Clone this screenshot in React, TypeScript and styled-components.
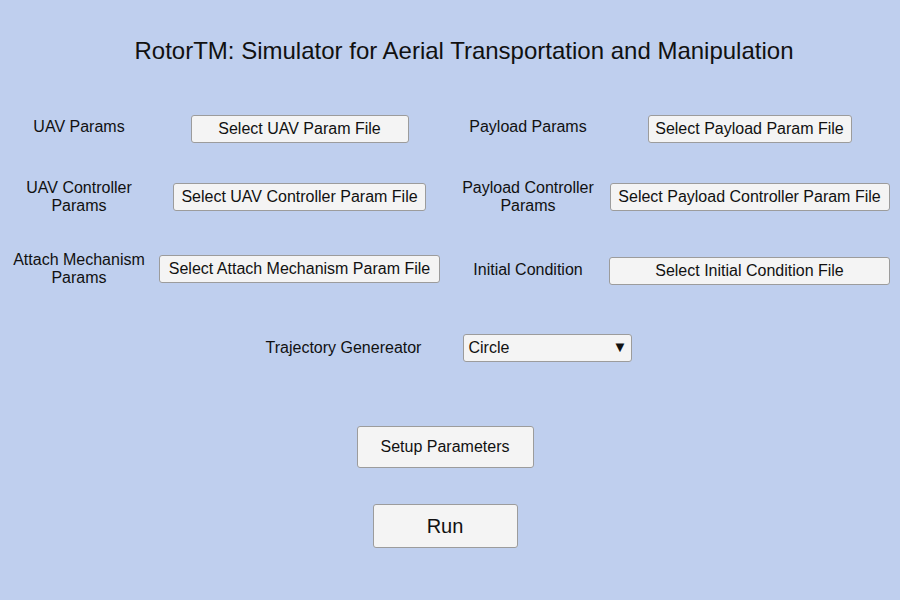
import React from "react";
import styled, { createGlobalStyle } from "styled-components";

const Global = createGlobalStyle`
  html, body { margin: 0; padding: 0; background: #bfcfee; }
  body { font-family: "Liberation Sans", Arial, sans-serif; color: #111; }
  #root { min-height: 600px; }
`;

const Page = styled.div`
  width: 900px;
  height: 600px;
  background: #bfcfee;
  display: flex;
  flex-direction: column;
  overflow: hidden;
`;

const Title = styled.h1`
  margin: 0;
  padding: 36px 0 0 28px;
  font-size: 24px;
  font-weight: normal;
  line-height: 30px;
  text-align: center;
  color: #111;
`;

const Grid = styled.div`
  margin-top: 47px;
  display: grid;
  grid-template-columns: 158px 283px 174px 269px;
  grid-auto-rows: auto;
  row-gap: 37px;
`;

const Cell = styled.div`
  display: flex;
  justify-content: center;
  align-items: center;
  min-width: 0;
`;

const Label = styled.div<{ $down?: number }>`
  font-size: 16px;
  line-height: 18px;
  text-align: center;
  white-space: nowrap;
  margin-top: ${(p) => p.$down ?? 0}px;
  margin-bottom: ${(p) => -(p.$down ?? 0)}px;
`;

const FileButton = styled.button<{ $w: number; $down?: number }>`
  flex: none;
  width: ${(p) => p.$w}px;
  height: 28px;
  padding: 0;
  margin-top: ${(p) => p.$down ?? 0}px;
  margin-bottom: ${(p) => -(p.$down ?? 0)}px;
  background: #f4f4f4;
  border: 1px solid #9c9c9c;
  border-radius: 3px;
  font-family: "Liberation Sans", Arial, sans-serif;
  font-size: 16px;
  color: #111;
  white-space: nowrap;
`;

const TrajRow = styled.div`
  margin-top: 47px;
  display: flex;
  justify-content: center;
  align-items: center;
  gap: 42px;
  padding-right: 2px;
`;

const Dropdown = styled.div`
  width: 169px;
  height: 28px;
  box-sizing: border-box;
  background: #f4f4f4;
  border: 1px solid #9c9c9c;
  border-radius: 3px;
  display: flex;
  align-items: center;
  justify-content: space-between;
  padding: 0 4px 0 4px;
  font-size: 16px;
`;

const Arrow = styled.span`
  font-size: 15px;
  line-height: 1;
  margin-top: -3px;
`;

const Actions = styled.div`
  display: flex;
  flex-direction: column;
  align-items: center;
  padding-right: 10px;
`;

const ActionButton = styled.button<{ $w: number; $h: number; $fs: number; $mt: number }>`
  margin-top: ${(p) => p.$mt}px;
  width: ${(p) => p.$w}px;
  height: ${(p) => p.$h}px;
  background: #f4f4f4;
  border: 1px solid #9c9c9c;
  border-radius: 3px;
  font-family: "Liberation Sans", Arial, sans-serif;
  font-size: ${(p) => p.$fs}px;
  color: #111;
  padding: 0;
`;

export default function App() {
  return (
    <Page>
      <Global />
      <Title>RotorTM: Simulator for Aerial Transportation and Manipulation</Title>
      <Grid>
        <Cell><Label>UAV Params</Label></Cell>
        <Cell><FileButton $w={218} $down={2}>Select UAV Param File</FileButton></Cell>
        <Cell><Label>Payload Params</Label></Cell>
        <Cell><FileButton $w={204} $down={2}>Select Payload Param File</FileButton></Cell>

        <Cell><Label $down={1}>UAV Controller<br />Params</Label></Cell>
        <Cell><FileButton $w={253} $down={1}>Select UAV Controller Param File</FileButton></Cell>
        <Cell><Label $down={1}>Payload Controller<br />Params</Label></Cell>
        <Cell><FileButton $w={280} $down={1}>Select Payload Controller Param File</FileButton></Cell>

        <Cell><Label>Attach Mechanism<br />Params</Label></Cell>
        <Cell><FileButton $w={281}>Select Attach Mechanism Param File</FileButton></Cell>
        <Cell><Label $down={1}>Initial Condition</Label></Cell>
        <Cell><FileButton $w={281} $down={2}>Select Initial Condition File</FileButton></Cell>
      </Grid>
      <TrajRow>
        <Label>Trajectory Genereator</Label>
        <Dropdown>
          <span>Circle</span>
          <Arrow>▼</Arrow>
        </Dropdown>
      </TrajRow>
      <Actions>
        <ActionButton $w={177} $h={42} $fs={16} $mt={64}>Setup Parameters</ActionButton>
        <ActionButton $w={145} $h={44} $fs={20} $mt={36}>Run</ActionButton>
      </Actions>
    </Page>
  );
}
